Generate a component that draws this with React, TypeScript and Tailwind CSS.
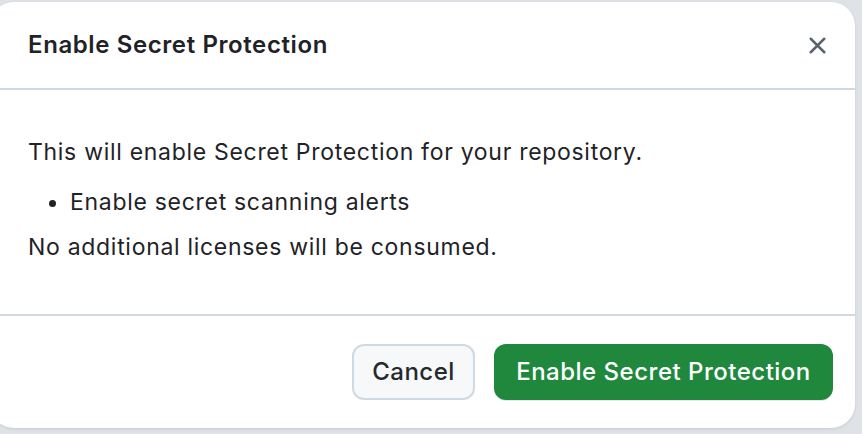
import { X } from "lucide-react";

export default function App() {
  return (
    <div className="w-[862px] h-[434px] overflow-hidden bg-[#dfe2e6] font-['Inter',sans-serif] text-[#1f2328]">
      <div className="mt-[2px] -ml-[10px] w-[865px] h-[426px] rounded-[24px] bg-white shadow-[0_1px_3px_rgba(31,35,40,0.12)] flex flex-col">
        <div className="h-[86px] shrink-0 flex items-center justify-between pl-[38px] pr-[22px]">
          <h1 className="text-[24px] font-semibold tracking-[0.6px]">Enable Secret Protection</h1>
          <button className="w-[32px] h-[32px] flex items-center justify-center text-[#59636e]">
            <X size={27} strokeWidth={2.2} />
          </button>
        </div>
        <div className="h-[2px] bg-[#d1d9e0] shrink-0" />
        <div className="h-[224px] shrink-0 pl-[38px] pt-[47px] text-[23px] leading-[30px] tracking-[0.7px]">
          <p>This will enable Secret Protection for your repository.</p>
          <ul className="list-disc pl-[42px] mt-[20px] mb-[15px]">
            <li>Enable secret scanning alerts</li>
          </ul>
          <p>No additional licenses will be consumed.</p>
        </div>
        <div className="h-[2px] bg-[#d1d9e0] shrink-0" />
        <div className="flex-1 flex items-center justify-end gap-[19px] pr-[22px]">
          <button className="h-[56px] w-[123px] rounded-[12px] border-2 border-[#d1d9e0] bg-[#f6f8fa] text-[24px] font-medium tracking-[0.5px] text-[#25292e]">
            Cancel
          </button>
          <button className="h-[56px] w-[339px] rounded-[12px] bg-[#1f883d] text-[24px] font-medium tracking-[0.5px] text-white shadow-[0_1px_0_rgba(31,35,40,0.1)]">
            Enable Secret Protection
          </button>
        </div>
      </div>
    </div>
  );
}
